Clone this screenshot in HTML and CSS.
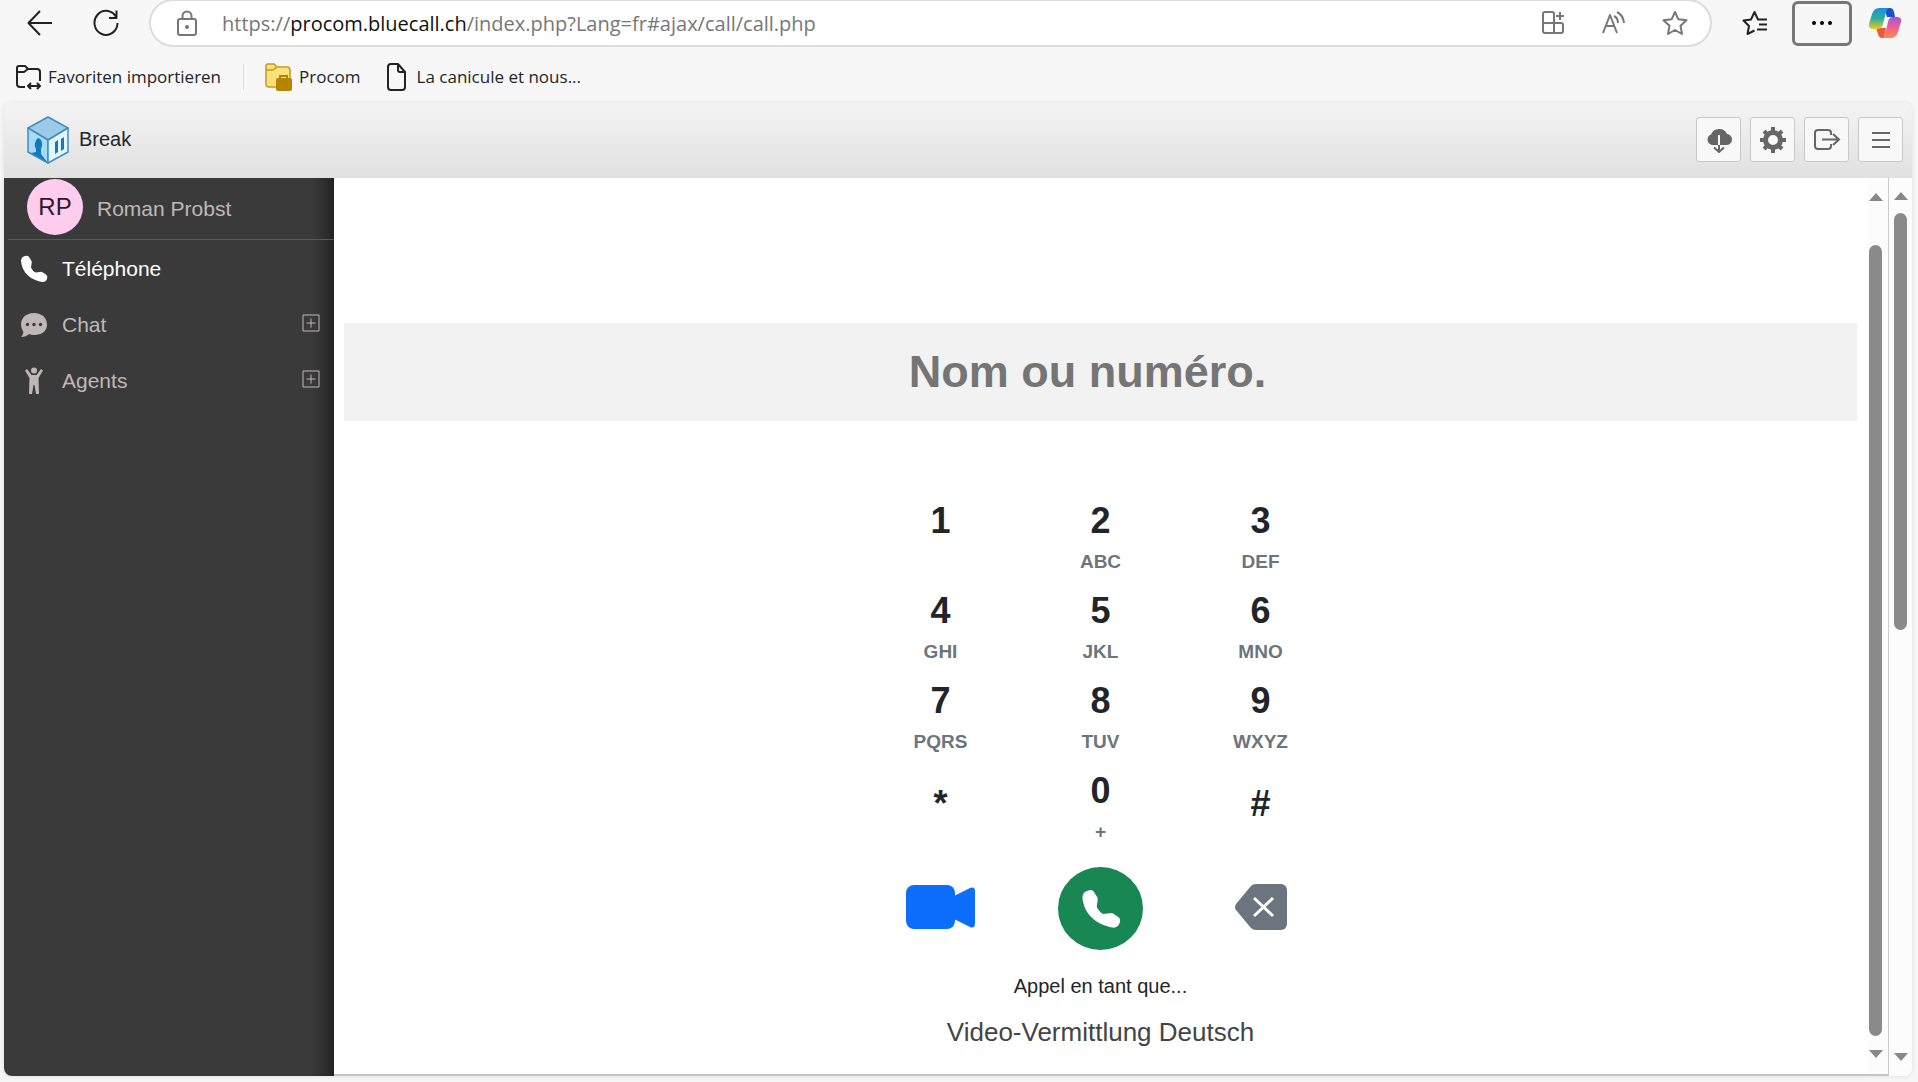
FILE: index.html
```html
<!DOCTYPE html>
<html lang="fr">
<head>
    <meta charset="UTF-8">
    <title>Break</title>
    <link rel="stylesheet" href="styles.css">
</head>
<body>
<!-- browser bar -->
<div class="toolbar">
    <button class="nav-btn" aria-label="Retour">
        <svg width="26" height="28" viewBox="0 0 26 28" class="line dark"><path d="M25 14H2M13 2L1.500 14L13 26"/></svg>
    </button>
    <button class="nav-btn reload" aria-label="Actualiser">
        <svg width="26" height="28" viewBox="0 0 26 28" class="line dark"><path d="M23.500 9A11.500 12 0 1 0 24.500 14M23.500 1.500V9H16"/></svg>
    </button>
    <div class="address">
        <svg width="20" height="26" viewBox="0 0 20 26" class="line grey"><rect x="1" y="9" width="18" height="16" rx="2"/><path d="M5.500 9V6a4.500 4.500 0 0 1 9 0V9"/><circle cx="10" cy="17" r="1" fill="#666"/></svg>
        <div class="url" role="textbox" aria-label="Adresse">https://<b>procom.bluecall.ch</b>/index.php?Lang=fr#ajax/call/call.php</div>
        <button aria-label="Applications">
            <svg width="24" height="24" viewBox="0 0 24 24" class="line grey"><path d="M12 22V3a2 2 0 0 0-2-2H3a2 2 0 0 0-2 2V20a2 2 0 0 0 2 2H19a2 2 0 0 0 2-2V14a2 2 0 0 0-2-2H1M18 1V9M14 5H22"/></svg>
        </button>
        <button aria-label="Lecture">
            <svg width="24" height="24" viewBox="0 0 24 24" class="line grey"><path d="M1 22L8 4L15 22M4 15H12M12 5q4 2 4 7M15 1q6 3 7 11"/></svg>
        </button>
        <button aria-label="Favori">
            <svg width="26" height="26" viewBox="0 0 26 26" class="line grey"><path d="M13 2L16.400 9.300L24.500 10.300L18.500 15.800L20 24L13 20L6 24L7.500 15.800L1.500 10.300L9.600 9.300Z"/></svg>
        </button>
    </div>
    <button class="fav-btn" aria-label="Favoris">
        <svg width="26" height="26" viewBox="0 0 26 26" class="line dark"><path d="M17.500 9.500H16L12.500 2L9 9.500L1.500 10.500L7 16L5.500 24L12.500 20.500M15.500 9.500H25M17 14.500H25M15 19.500H25"/></svg>
    </button>
    <button class="more-btn" aria-label="Plus">
        <svg width="22" height="6" viewBox="0 0 22 6"><circle cx="3" cy="3" r="2"/><circle cx="11" cy="3" r="2"/><circle cx="19" cy="3" r="2"/></svg>
    </button>
    <button class="copilot" aria-label="Copilot">
        <svg width="34" height="32" viewBox="0 0 34 32">
            <defs>
                <linearGradient id="c1" x1="0" y1="0" x2="0" y2="1"><stop offset="0" stop-color="#1a8fe3"/><stop offset=".5" stop-color="#2fae9a"/><stop offset="1" stop-color="#f2c81e"/></linearGradient>
                <linearGradient id="c2" x1="0" y1="0" x2="0" y2="1"><stop offset="0" stop-color="#a64fe8"/><stop offset=".5" stop-color="#f0608f"/><stop offset="1" stop-color="#fb8a4a"/></linearGradient>
            </defs>
            <path d="M16 1H22q3 0 4 4l1 5H19z" fill="#1c4fd0"/>
            <path d="M8 21h10l-2 10h-2q-3 0-4-4z" fill="#f0583c"/>
            <path d="M11 1H22q-3 0-4 4L15 17q-1 5-6 5H5q-5 0-4-5L4 7q2-6 7-6z" fill="url(#c1)"/>
            <path d="M23 31H13q3 0 4-4L20 15q1-5 5-5h4q5 0 4 5L30 25q-2 6-7 6z" fill="url(#c2)"/>
        </svg>
    </button>
</div>
<div class="bookmarks">
    <a href="#" class="import">
        <svg width="25" height="26" viewBox="0 0 25 26" class="line dark"><path d="M9 23H4a3 3 0 0 1-3-3V4a2 2 0 0 1 2-2H9l3 3H21a3 3 0 0 1 3 3V17M1 8H8L12 5M12 22H24M15 19L12 22L15 25M21 19L24 22L21 25"/></svg>
        Favoriten importieren
    </a>
    <a href="#" class="folder">
        <svg width="27" height="29" viewBox="0 0 27 29"><path d="M1 4a2 2 0 0 1 2-2H9l3 3H22a3 3 0 0 1 3 3V25H4a3 3 0 0 1-3-3z" fill="#ffe07a" stroke="#c79a1c" stroke-width="1.500"/><path d="M1 8H8L12 5" fill="none" stroke="#c79a1c" stroke-width="1.500"/><rect x="11" y="16" width="16" height="13" rx="2" fill="#b58500"/><path d="M15 17V14H22V17" fill="none" stroke="#b58500" stroke-width="2"/></svg>
        Procom
    </a>
    <a href="#" class="page">
        <svg width="19" height="28" viewBox="0 0 19 28" class="line dark"><path d="M11 1H4a3 3 0 0 0-3 3V24a3 3 0 0 0 3 3H15a3 3 0 0 0 3-3V9L11 1V7a2 2 0 0 0 2 2H18"/></svg>
        La canicule et nous...
    </a>
</div>

<!-- application -->
<div class="app">
    <header class="header">
        <svg class="logo" width="42" height="48" viewBox="0 0 42 48">
            <g stroke="#3f8fbd" stroke-width="1.500" stroke-linejoin="round">
                <path d="M21 1L41 12L21 24L1 12Z" fill="#9bcbe6"/>
                <path d="M1 12L21 24V47L1 36Z" fill="#a8daf5"/>
                <path d="M41 12L21 24V47L41 36Z" fill="#e4f5ff"/>
            </g>
            <path d="M11 22q4 1 4 6q0 4-1 5v5l6 8L4 37l5-1v-3q-2-3-1-6q1-4 3-5z" fill="#1179bd"/>
            <path d="M28 26l3-2v12l-3 2zM34 23l3-2v12l-3 2z" fill="#1179bd"/>
        </svg>
        <span class="brand">Break</span>
        <div class="tools">
            <button aria-label="Télécharger">
                <svg width="26" height="26" viewBox="0 0 26 26"><path d="M6 18a5.500 5.500 0 0 1-1-10.500A8.500 8 0 0 1 21 7a5.500 5.500 0 0 1-1 11z"/><path d="M13 8V18" class="gap"/><path d="M13 18V25M8 20.500L13 25L18 20.500" class="s"/></svg>
            </button>
            <button aria-label="Paramètres">
                <svg width="26" height="26" viewBox="0 0 26 26"><circle cx="13" cy="13" r="7.500" fill="none" stroke="#666" stroke-width="5"/><path d="M13 0V5M13 21V26M0 13H5M21 13H26M4 4L7 7M19 19L22 22M4 22L7 19M19 7L22 4" stroke="#666" stroke-width="4"/></svg>
            </button>
            <button aria-label="Déconnexion">
                <svg width="28" height="24" viewBox="0 0 28 24"><path d="M18 7V5a3 3 0 0 0-3-3H5a3 3 0 0 0-3 3V18a3 3 0 0 0 3 3H15a3 3 0 0 0 3-3V16M9 11.500H26M20 6L26 11.500L20 17" class="s"/></svg>
            </button>
            <button aria-label="Menu">
                <svg width="20" height="18" viewBox="0 0 20 18"><path d="M1 2H19M1 9H19M1 16H19" class="s"/></svg>
            </button>
        </div>
    </header>

    <div class="main">
        <nav class="sidebar">
            <div class="user">
                <span class="avatar">RP</span>
                <a href="#">Roman Probst</a>
            </div>
            <ul>
                <li class="active">
                    <a href="#">
                        <svg width="28" height="28" viewBox="0 0 28 28"><use href="#phone"/></svg>
                        Téléphone
                    </a>
                </li>
                <li>
                    <a href="#">
                        <svg width="28" height="28" viewBox="0 0 28 28"><path d="M14 2C22 2 27 7 27 13.500S22 24 14 24q-3 0-5 -1Q6 26 1 26Q4 23 3 20Q1 17 1 13.500C1 7 6 2 14 2z"/><g fill="#3a3a3a"><circle cx="7.500" cy="13.500" r="1.700"/><circle cx="14" cy="13.500" r="1.700"/><circle cx="20.500" cy="13.500" r="1.700"/></g></svg>
                        Chat
                    </a>
                    <button class="plus" aria-label="Ouvrir Chat"><svg width="18" height="18" viewBox="0 0 18 18"><path d="M1 1H17V17H1ZM9 4.500V13.500M4.500 9H13.500"/></svg></button>
                </li>
                <li>
                    <a href="#">
                        <svg width="28" height="28" viewBox="0 0 28 28"><circle cx="14" cy="3.500" r="3"/><path d="M5 3.500L7 2L11.500 8H16.500L21 2L23 3.500L18.500 11L19 27H16L14.500 18H13.500L12 27H9L9.500 11z"/></svg>
                        Agents
                    </a>
                    <button class="plus" aria-label="Ouvrir Agents"><svg width="18" height="18" viewBox="0 0 18 18"><path d="M1 1H17V17H1ZM9 4.500V13.500M4.500 9H13.500"/></svg></button>
                </li>
            </ul>
        </nav>

        <main class="content">
            <input class="number" type="text" placeholder="Nom ou numéro." aria-label="Nom ou numéro">
            <div class="keypad">
                <button>1</button>
                <button>2<small>ABC</small></button>
                <button>3<small>DEF</small></button>
                <button>4<small>GHI</small></button>
                <button>5<small>JKL</small></button>
                <button>6<small>MNO</small></button>
                <button>7<small>PQRS</small></button>
                <button>8<small>TUV</small></button>
                <button>9<small>WXYZ</small></button>
                <button class="sign">*</button>
                <button>0<small>+</small></button>
                <button class="sign">#</button>
            </div>
            <div class="actions">
                <button aria-label="Appel vidéo">
                    <svg width="70" height="44" viewBox="0 0 70 44" fill="#0d6efd"><rect x="0" y="0" width="49" height="44" rx="8"/><path d="M48 11L64 3Q69 1 69 6V38Q69 44 64 42L48 34z"/></svg>
                </button>
                <button class="call" aria-label="Appeler">
                    <svg width="40" height="40" viewBox="0 0 28 28" fill="#fff"><path id="phone" d="M1 6Q1 2 5 1Q8 0 9 2L11.500 6Q12 7 11.500 9L11 12.500Q12.500 16 15.500 17.500L20 17Q21.500 16.500 23 17.500L26.500 20Q28 21.500 27 24Q25.500 27.500 22 27C11 25 2 18 1 6z"/></svg>
                </button>
                <button aria-label="Effacer">
                    <svg width="52" height="48" viewBox="0 0 52 48"><path d="M16 3Q18 1 21 1H46a6 6 0 0 1 6 6V41a6 6 0 0 1-6 6H21Q18 47 16 45L1 27Q-1 24 1 21z" fill="#6c757d"/><path d="M19 15L38 33M38 15L19 33" stroke="#fff" stroke-width="3"/></svg>
                </button>
            </div>
            <p class="as">Appel en tant que...</p>
            <p class="line-name">Video-Vermittlung Deutsch</p>
        </main>
        <div class="scroll inner"><i class="up"></i><div class="thumb"></div><i class="down"></i></div>
        <div class="scroll outer"><i class="up"></i><div class="track"><div class="thumb"></div></div><i class="down"></i></div>
    </div>
</div>
</body>
</html>
```
FILE: styles.css
```css
*{
    box-sizing: border-box;
}
body{
    margin:0;
    min-height:100vh;
    display:flex;
    flex-direction: column;
    background:#f7f7f7;
    font-family:"Liberation Sans", Arial, sans-serif;
    color:#212529;
}
button{
    padding:0;
    border:0;
    background:none;
    font:inherit;
    color:inherit;
    display:flex;
    align-items: center;
    justify-content: center;
    cursor:pointer;
}
a{
    color:inherit;
    text-decoration: none;
}
svg{
    flex:none;
}
.line{
    fill:none;
    stroke-width:2;
    stroke-linejoin:round;
}
.dark{
    stroke:#222;
}
.grey{
    stroke:#777;
}

/* browser bar */
.toolbar{
    display:flex;
    align-items: center;
    height:48px;
    padding:0 16px 2px 27px;
    font-family:"Open Sans", sans-serif;
}
.nav-btn{
    width:26px;
}
.reload{
    margin:0 30px 0 40px;
}
.address{
    flex:1;
    height:48px;
    display:flex;
    align-items: center;
    gap:36px;
    padding:0 22px 0 26px;
    border:2px solid #dcdcdc;
    border-radius:24px;
    background:#fff;
}
.url{
    flex:1;
    margin-left:-11px;
    font-size:20px;
    color:#777;
}
.url b{
    font-weight:normal;
    color:#111;
}
.fav-btn{
    margin:0 24px 0 30px;
}
.more-btn{
    width:60px;
    height:45px;
    margin-right:16px;
    border:3px solid #777;
    border-radius:6px;
}
.bookmarks{
    display:flex;
    align-items: center;
    height:55px;
    padding:2px 16px 0;
    font-family:"Open Sans", sans-serif;
    font-size:17px;
}
.bookmarks a{
    display:flex;
    align-items: center;
    gap:7px;
}
.bookmarks .import{
    padding-right:22px;
    border-right:1px solid #dcdcdc;
}
.bookmarks .folder{
    margin:0 26px 0 21px;
}
.bookmarks .page{
    gap:11px;
}

/* application */
.app{
    flex:1;
    display:flex;
    flex-direction: column;
    margin:0 6px 6px 4px;
    border-radius:8px;
    overflow: hidden;
    background:#fff;
    box-shadow:0 0 5px #ddd;
}
.header{
    display:flex;
    align-items: center;
    height:75px;
    padding:0 9px 2px 23px;
    background:linear-gradient(#f4f4f4, #e0e0e0);
}
.brand{
    margin-left:10px;
    font-size:20px;
}
.tools{
    display:flex;
    gap:9px;
    margin-left:auto;
}
.tools button{
    width:45px;
    height:45px;
    border:1px solid #c8c8c8;
    border-radius:3px;
    background:#f8f8f8;
}
.tools svg{
    fill:#666;
}
.tools .s{
    fill:none;
    stroke:#666;
    stroke-width:2;
}
.tools .gap{
    stroke:#f8f8f8;
    stroke-width:2;
}
.main{
    flex:1;
    display:flex;
}
.sidebar{
    width:330px;
    background:linear-gradient(to left, #222 0, #2d2d2d 8px, #3a3a3a 22px);
    color:#c0b8b8;
    font-size:21px;
}
.user{
    display:flex;
    align-items: center;
    gap:14px;
    height:62px;
    margin-left:4px;
    padding:0 0 3px 19px;
    border-bottom:1px solid #5a5a5a;
}
.user a{
    padding-top:3px;
}
.avatar{
    width:56px;
    height:56px;
    border-radius:50%;
    background:#ffccee;
    color:#2b1a2b;
    font-size:24px;
    line-height:56px;
    text-align: center;
}
.sidebar ul{
    list-style: none;
    margin:0;
    padding:1px 14px 0 16px;
}
.sidebar li{
    display:flex;
    align-items: center;
    justify-content: space-between;
    height:56px;
}
.sidebar li a{
    display:flex;
    align-items: center;
    gap:14px;
}
.sidebar svg{
    fill:currentColor;
}
.sidebar .active{
    color:#fff;
}
.plus{
    padding-bottom:5px;
}
.sidebar .plus svg{
    fill:none;
    stroke:currentColor;
    stroke-width:1;
}
.content{
    flex:1;
    padding:145px 11px 16px 10px;
    text-align: center;
    border-bottom:2px solid #c4c4c4;
}
.number{
    display:block;
    width:100%;
    height:98px;
    padding:0 26px 0 0;
    border:0;
    background:#f2f2f2;
    font:bold 45px "Liberation Sans", Arial, sans-serif;
    text-align: center;
}
.number::placeholder{
    color:#757575;
}
.keypad,
.actions{
    display:grid;
    grid-template-columns: repeat(3, 160px);
    justify-content: center;
}
.keypad{
    grid-auto-rows: 84px;
    row-gap:6px;
    margin-top:77px;
}
.keypad button{
    flex-direction: column;
    justify-content: flex-start;
    font-size:36px;
    font-weight:bold;
    line-height:46px;
}
.keypad small{
    color:#6c757d;
    font-size:19px;
    line-height:36px;
}
.keypad .sign{
    padding-top:13px;
}
.actions{
    margin-top:15px;
    align-items: center;
    justify-items: center;
}
.actions button{
    padding-bottom:4px;
}
.actions .call{
    width:85px;
    height:83px;
    padding:0;
    border-radius:50%;
    background:#198754;
}
.content p{
    margin:0;
}
.content .as{
    margin-top:16px;
    font-size:20px;
    line-height:40px;
}
.content .line-name{
    color:#444;
    font-size:26px;
    line-height:52px;
}

/* scrollbars */
.scroll{
    display:flex;
    flex-direction: column;
    align-items: center;
    width:24px;
    background:#fcfcfc;
}
.inner{
    width:20px;
    padding:15px 5px 16px 0;
    border-bottom:2px solid #c4c4c4;
}
.outer{
    padding:14px 0 15px;
    border-left:1px solid #ccc;
}
.up,
.down{
    border:7px solid transparent;
}
.up{
    border-top:0;
    border-bottom:8px solid #888;
}
.down{
    border-bottom:0;
    border-top:8px solid #888;
}
.thumb{
    width:13px;
    border-radius:7px;
    background:#8a8a8a;
}
.inner .thumb{
    flex:1;
    margin:44px 0 14px;
}
.track{
    flex:1;
    display:flex;
    margin:13px 0 7px;
}
.track .thumb{
    height:50%;
}
```
